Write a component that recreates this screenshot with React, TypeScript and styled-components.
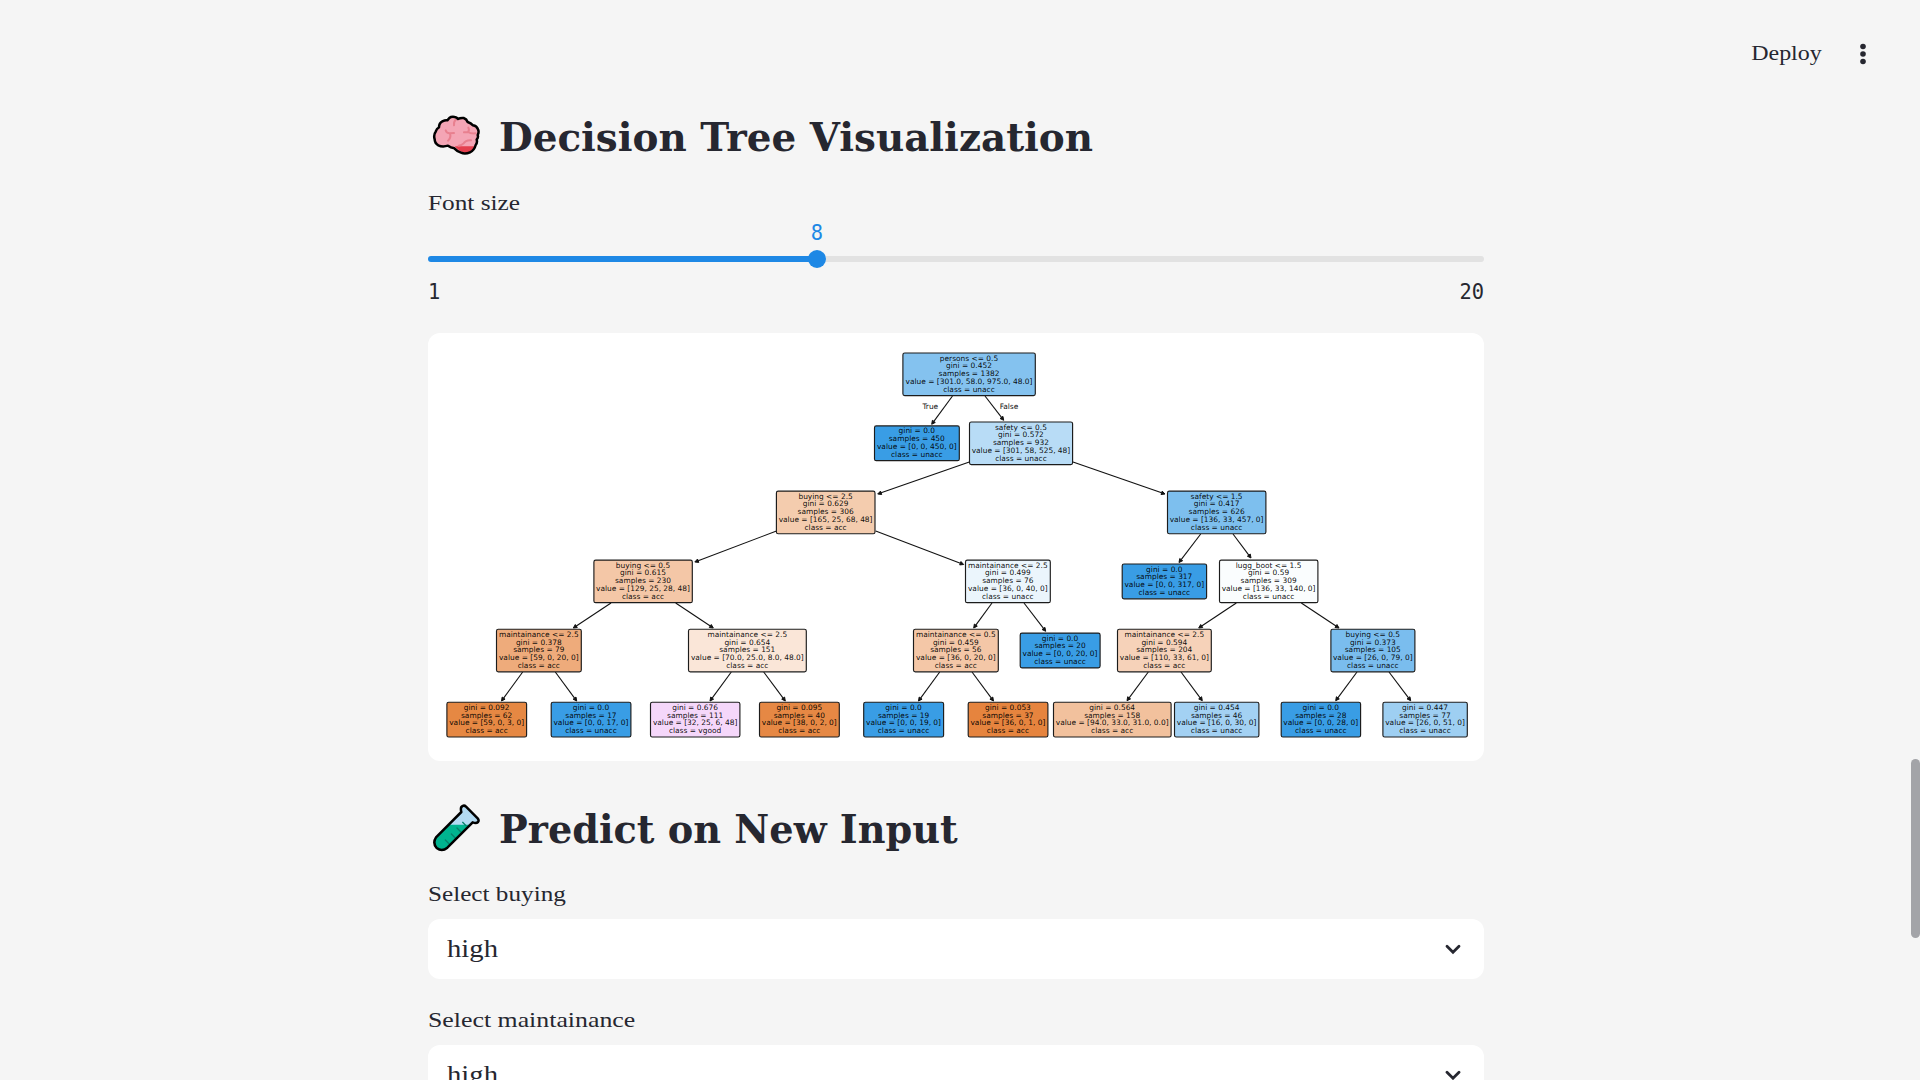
import React from "react";
import styled, { createGlobalStyle } from "styled-components";

const Global = createGlobalStyle`
  html, body { margin: 0; background: #f5f5f5; overflow: hidden; }
  * { box-sizing: border-box; }
`;

const serif = `"Liberation Serif", "Times New Roman", serif`;
const mono = `"DejaVu Sans Mono", "Liberation Mono", monospace`;

const Page = styled.div`
  width: 1920px;
  height: 1080px;
  overflow: hidden;
  background: #f5f5f5;
  color: #262730;
  font-family: ${serif};
`;

const Header = styled.header`
  display: flex;
  align-items: center;
  justify-content: flex-end;
  gap: 37px;
  height: 108px;
  padding-right: 53px;
`;

const Deploy = styled.button`
  border: 0;
  padding: 0 0 2px;
  background: none;
  color: inherit;
  font: 22px/30px ${serif};
  transform: scaleX(1.09);
  transform-origin: right;
`;

const Main = styled.main`
  width: 1056px;
  margin-left: 428px;
`;

const HeadingRow = styled.h2<{ $top: number }>`
  display: flex;
  align-items: center;
  height: 56px;
  margin: ${(p) => p.$top}px 0 0;
  font: bold 39.5px/56px "DejaVu Serif", serif;
  white-space: nowrap;
`;

const HeadingText = styled.span<{ $x: number }>`
  display: inline-block;
  padding-top: 2px;
  transform: scaleX(${(p) => p.$x});
  transform-origin: left;
`;

const EmojiSlot = styled.span`
  display: flex;
  flex: none;
  width: 71px;
  padding-left: 4px;
`;

const Stretch = styled.span<{ $x: number }>`
  display: inline-block;
  transform: scaleX(${(p) => p.$x});
  transform-origin: left;
`;

const Label = styled.div<{ $top: number }>`
  height: 30px;
  margin-top: ${(p) => p.$top}px;
  font-size: 22px;
  line-height: 30px;
`;

const Slider = styled.div`
  height: 91px;
  padding-top: 3px;
  font: 20.4px/24px ${mono};
`;

const ValueRow = styled.div`
  width: 778px;
  height: 29px;
  color: #1e88e5;
  text-align: center;
`;

const Track = styled.div`
  display: flex;
  align-items: center;
  height: 18px;
`;

const Filled = styled.div`
  width: 381px;
  height: 6px;
  margin-right: -1px;
  border-radius: 3px 0 0 3px;
  background: #1e88e5;
`;

const Thumb = styled.div`
  width: 18px;
  height: 18px;
  border-radius: 50%;
  background: #1e88e5;
`;

const Rest = styled.div`
  flex: 1;
  height: 6px;
  border-radius: 0 3px 3px 0;
  background: #e2e2e2;
`;

const Range = styled.div`
  display: flex;
  justify-content: space-between;
  margin-top: 12px;
`;

const ChartCard = styled.div`
  height: 428px;
  margin-top: 24px;
  border-radius: 12px;
  background: #fff;
  overflow: hidden;
`;

const Chart = styled.svg`
  display: block;
  font-family: "DejaVu Sans", sans-serif;
  font-size: 7.45px;
`;

const Select = styled.div`
  display: flex;
  align-items: center;
  justify-content: space-between;
  height: 60px;
  margin-top: 10px;
  padding: 0 22px 0 19px;
  border-radius: 12px;
  background: #fff;
  font-size: 24.5px;
`;

const ScrollThumb = styled.div`
  position: absolute;
  top: 759px;
  left: 1911px;
  width: 9px;
  height: 179px;
  border-radius: 5px;
  background: #a3a4a8;
`;

const Kebab = () => (
  <svg width="8" height="22" viewBox="0 0 8 22" fill="#262730">
    <circle cx="4" cy="3.5" r="2.8" />
    <circle cx="4" cy="11" r="2.8" />
    <circle cx="4" cy="18.5" r="2.8" />
  </svg>
);

const Chevron = () => (
  <svg width="18" height="14" viewBox="0 0 18 14" fill="none" stroke="#262730" strokeWidth="2.8" strokeLinecap="round">
    <path d="M3 4.2 9 10.2 15 4.2" />
  </svg>
);

const brainOutline =
  "M88 54 Q94 49 104 51 Q110 52 114 57 Q121 53 131 54 Q140 57 143 66 Q153 69 159 76 Q170 78 174 88 Q178 96 173 105 Q176 112 170 119 Q173 128 167 135 Q163 151 150 157 Q135 164 123 158 Q111 154 103 145 Q92 143 84 137 Q67 142 55 136 Q44 130 44 118 Q40 104 47 95 Q50 85 57 82 Q57 69 67 64 Q77 59 82 61 Z";

const Brain = () => (
  <svg width="50" height="44" viewBox="36 42 150 132" fill="none" strokeLinecap="round" strokeLinejoin="round">
    <path d={brainOutline} fill="#f4a5b5" />
    <path d="M104 139 H165 Q160 156 145 159 Q124 162 104 139Z" fill="#e4404f" />
    <path
      d="M108 59 Q101 63 102 76 M77 91 Q80 101 90 100 L102 99 M90 100 Q94 114 84 122 M132 97 L144 96 Q151 101 167 100 M145 83 Q149 91 144 96 M153 121 Q137 120 130 131 Q126 136 116 137"
      stroke="#e8808f"
      strokeWidth="6"
    />
    <path d={brainOutline} stroke="#000" strokeWidth="7.5" />
  </svg>
);

const TestTube = () => (
  <svg width="50" height="50" viewBox="36 40 150 150" fill="none" strokeLinecap="round" strokeLinejoin="round">
    <path d="M127 64 L50 141 Q38 155 47 170 Q61 187 80 174 L158 95 Z" fill="#b2daf2" />
    <path d="M86 105 H148 L80 174 Q61 187 47 170 Q38 155 50 141 Z" fill="#00b38f" />
    <path d="M123 55 Q126 47 134 50 L172 88 Q178 96 171 100 L160 97 L125 66 Z" fill="#b2daf2" />
    <path d="M128 98 138 108 M111 115 122 126 M94 133 105 144 M76 151 87 162" stroke="#08806b" strokeWidth="4" />
    <path
      d="M124 67 Q120 52 128 49 Q133 46 138 51 L173 86 Q178 92 174 97 Q169 102 158 98 L82 174 Q66 187 50 175 Q37 160 48 143 Z"
      stroke="#000"
      strokeWidth="7.5"
    />
  </svg>
);

type TreeNode = { l: number; r: number; y: number; fill: string; lines: string[] };

const blue = "#399de5";
const node = (l: number, r: number, y: number, fill: string, text: string): TreeNode => ({
  l,
  r,
  y,
  fill,
  lines: text.split("|"),
});

const nodes: TreeNode[] = [
  node(902.7, 1035.7, 374.3, "#84c2ef", "persons <= 0.5|gini = 0.452|samples = 1382|value = [301.0, 58.0, 975.0, 48.0]|class = unacc"),
  node(874.3, 959.7, 443.3, blue, "gini = 0.0|samples = 450|value = [0, 0, 450, 0]|class = unacc"),
  node(969.3, 1073, 443.3, "#b8dcf6", "safety <= 0.5|gini = 0.572|samples = 932|value = [301, 58, 525, 48]|class = unacc"),
  node(776.2, 875.4, 512.4, "#f4ccae", "buying <= 2.5|gini = 0.629|samples = 306|value = [165, 25, 68, 48]|class = acc"),
  node(1167.3, 1266.3, 512.4, "#7dbfee", "safety <= 1.5|gini = 0.417|samples = 626|value = [136, 33, 457, 0]|class = unacc"),
  node(593.7, 692.7, 581.4, "#f4c7a7", "buying <= 0.5|gini = 0.615|samples = 230|value = [129, 25, 28, 48]|class = acc"),
  node(965.3, 1050.7, 581.4, "#ebf5fc", "maintainance <= 2.5|gini = 0.499|samples = 76|value = [36, 0, 40, 0]|class = unacc"),
  node(1122, 1207, 581.4, blue, "gini = 0.0|samples = 317|value = [0, 0, 317, 0]|class = unacc"),
  node(1219.3, 1318.3, 581.4, "#fafdfe", "lugg_boot <= 1.5|gini = 0.59|samples = 309|value = [136, 33, 140, 0]|class = unacc"),
  node(496.3, 581.7, 650.5, "#eeab7b", "maintainance <= 2.5|gini = 0.378|samples = 79|value = [59, 0, 20, 0]|class = acc"),
  node(688.3, 806.7, 650.5, "#fae6d8", "maintainance <= 2.5|gini = 0.654|samples = 151|value = [70.0, 25.0, 8.0, 48.0]|class = acc"),
  node(913.3, 998.7, 650.5, "#f4c7a7", "maintainance <= 0.5|gini = 0.459|samples = 56|value = [36, 0, 20, 0]|class = acc"),
  node(1020, 1100.5, 650.5, blue, "gini = 0.0|samples = 20|value = [0, 0, 20, 0]|class = unacc"),
  node(1117.3, 1211.7, 650.5, "#f6d2b9", "maintainance <= 2.5|gini = 0.594|samples = 204|value = [110, 33, 61, 0]|class = acc"),
  node(1330.7, 1415.3, 650.5, "#7abdee", "buying <= 0.5|gini = 0.373|samples = 105|value = [26, 0, 79, 0]|class = unacc"),
  node(446.7, 527, 719.6, "#e68843", "gini = 0.092|samples = 62|value = [59, 0, 3, 0]|class = acc"),
  node(551, 631.3, 719.6, blue, "gini = 0.0|samples = 17|value = [0, 0, 17, 0]|class = unacc"),
  node(650.3, 740.3, 719.6, "#f5d7fa", "gini = 0.676|samples = 111|value = [32, 25, 6, 48]|class = vgood"),
  node(759.3, 839.7, 719.6, "#e68844", "gini = 0.095|samples = 40|value = [38, 0, 2, 0]|class = acc"),
  node(863.5, 944, 719.6, blue, "gini = 0.0|samples = 19|value = [0, 0, 19, 0]|class = unacc"),
  node(968, 1048.3, 719.6, "#e6843e", "gini = 0.053|samples = 37|value = [36, 0, 1, 0]|class = acc"),
  node(1053.3, 1171.5, 719.6, "#f2c19d", "gini = 0.564|samples = 158|value = [94.0, 33.0, 31.0, 0.0]|class = acc"),
  node(1174.3, 1259.3, 719.6, "#a3d1f3", "gini = 0.454|samples = 46|value = [16, 0, 30, 0]|class = unacc"),
  node(1281, 1361, 719.6, blue, "gini = 0.0|samples = 28|value = [0, 0, 28, 0]|class = unacc"),
  node(1382.7, 1467.7, 719.6, "#9ecff2", "gini = 0.447|samples = 77|value = [26, 0, 51, 0]|class = unacc"),
];

const edges: number[][] = [
  [952.5, 396, 931.7, 424.3], [985, 396, 1003.7, 420.3],
  [969.3, 462, 877.7, 494], [1073, 462, 1165, 494],
  [776.5, 531, 694.8, 562], [875.7, 531, 963.7, 564.5],
  [1200.7, 534, 1179, 562.5], [1233, 534, 1251, 558],
  [611, 603, 573.3, 628], [675.7, 603, 713.3, 628],
  [992, 603, 973.7, 628], [1024, 603, 1045.7, 631.3],
  [1236.3, 603, 1198.7, 628], [1301.3, 603, 1339, 628],
  [522.7, 672, 501.5, 701], [555.3, 672, 576.7, 701],
  [731.3, 672, 710, 701], [763.7, 672, 785.3, 701],
  [939.7, 672, 918.5, 701], [972, 672, 993.5, 701],
  [1148.3, 672, 1127, 700.7], [1181, 672, 1202.3, 700.7],
  [1357, 672, 1335.7, 700.7], [1389, 672, 1410.7, 700.7],
];

const DecisionTree = () => (
  <Chart width="1056" height="428" viewBox="428 333 1056 428" textRendering="geometricPrecision">
    {edges.map(([x1, y1, x2, y2], i) => {
      const len = Math.hypot(x2 - x1, y2 - y1);
      const ux = (x2 - x1) / len;
      const uy = (y2 - y1) / len;
      const bx = x2 - ux * 3.6;
      const by = y2 - uy * 3.6;
      return (
        <g key={i} stroke="#111" strokeWidth="1.1">
          <path d={`M${x1} ${y1}L${bx} ${by}`} />
          <path
            d={`M${x2} ${y2}L${bx - uy * 1.8} ${by + ux * 1.8}L${bx + uy * 1.8} ${by - ux * 1.8}Z`}
            fill="#111"
            strokeWidth="1"
          />
        </g>
      );
    })}
    <text x="930.3" y="408.6" textAnchor="middle" fill="#111">True</text>
    <text x="1009" y="408.6" textAnchor="middle" fill="#111">False</text>
    {nodes.map((n, i) => {
      const h = n.lines.length * 7.8 + 3.6;
      const top = n.y - h / 2;
      return (
        <g key={i}>
          <rect x={n.l + 0.2} y={top} width={n.r - n.l - 0.6} height={h} rx="1.8" fill={n.fill} stroke="#1c1c1c" strokeWidth="1.15" />
          {n.lines.map((line, k) => (
            <text key={k} x={(n.l + n.r) / 2 - 0.2} y={top + 7.5 + k * 7.8} textAnchor="middle" fill="#000" fillOpacity="0.95">
              {line}
            </text>
          ))}
        </g>
      );
    })}
  </Chart>
);

export default function App() {
  return (
    <Page>
      <Global />
      <Header>
        <Deploy>Deploy</Deploy>
        <Kebab />
      </Header>
      <Main>
        <HeadingRow $top={0}>
          <EmojiSlot><Brain /></EmojiSlot>
          <HeadingText $x={0.984}>Decision Tree Visualization</HeadingText>
        </HeadingRow>
        <Label $top={24}><Stretch $x={1.15}>Font size</Stretch></Label>
        <Slider>
          <ValueRow>8</ValueRow>
          <Track>
            <Filled />
            <Thumb />
            <Rest />
          </Track>
          <Range>
            <span>1</span>
            <span>20</span>
          </Range>
        </Slider>
        <ChartCard>
          <DecisionTree />
        </ChartCard>
        <HeadingRow $top={39}>
          <EmojiSlot><TestTube /></EmojiSlot>
          <HeadingText $x={0.968}>Predict on New Input</HeadingText>
        </HeadingRow>
        <Label $top={23}><Stretch $x={1.145}>Select buying</Stretch></Label>
        <Select>
          <Stretch $x={1.17}>high</Stretch>
          <Chevron />
        </Select>
        <Label $top={26}><Stretch $x={1.174}>Select maintainance</Stretch></Label>
        <Select>
          <Stretch $x={1.17}>high</Stretch>
          <Chevron />
        </Select>
      </Main>
      <ScrollThumb />
    </Page>
  );
}
